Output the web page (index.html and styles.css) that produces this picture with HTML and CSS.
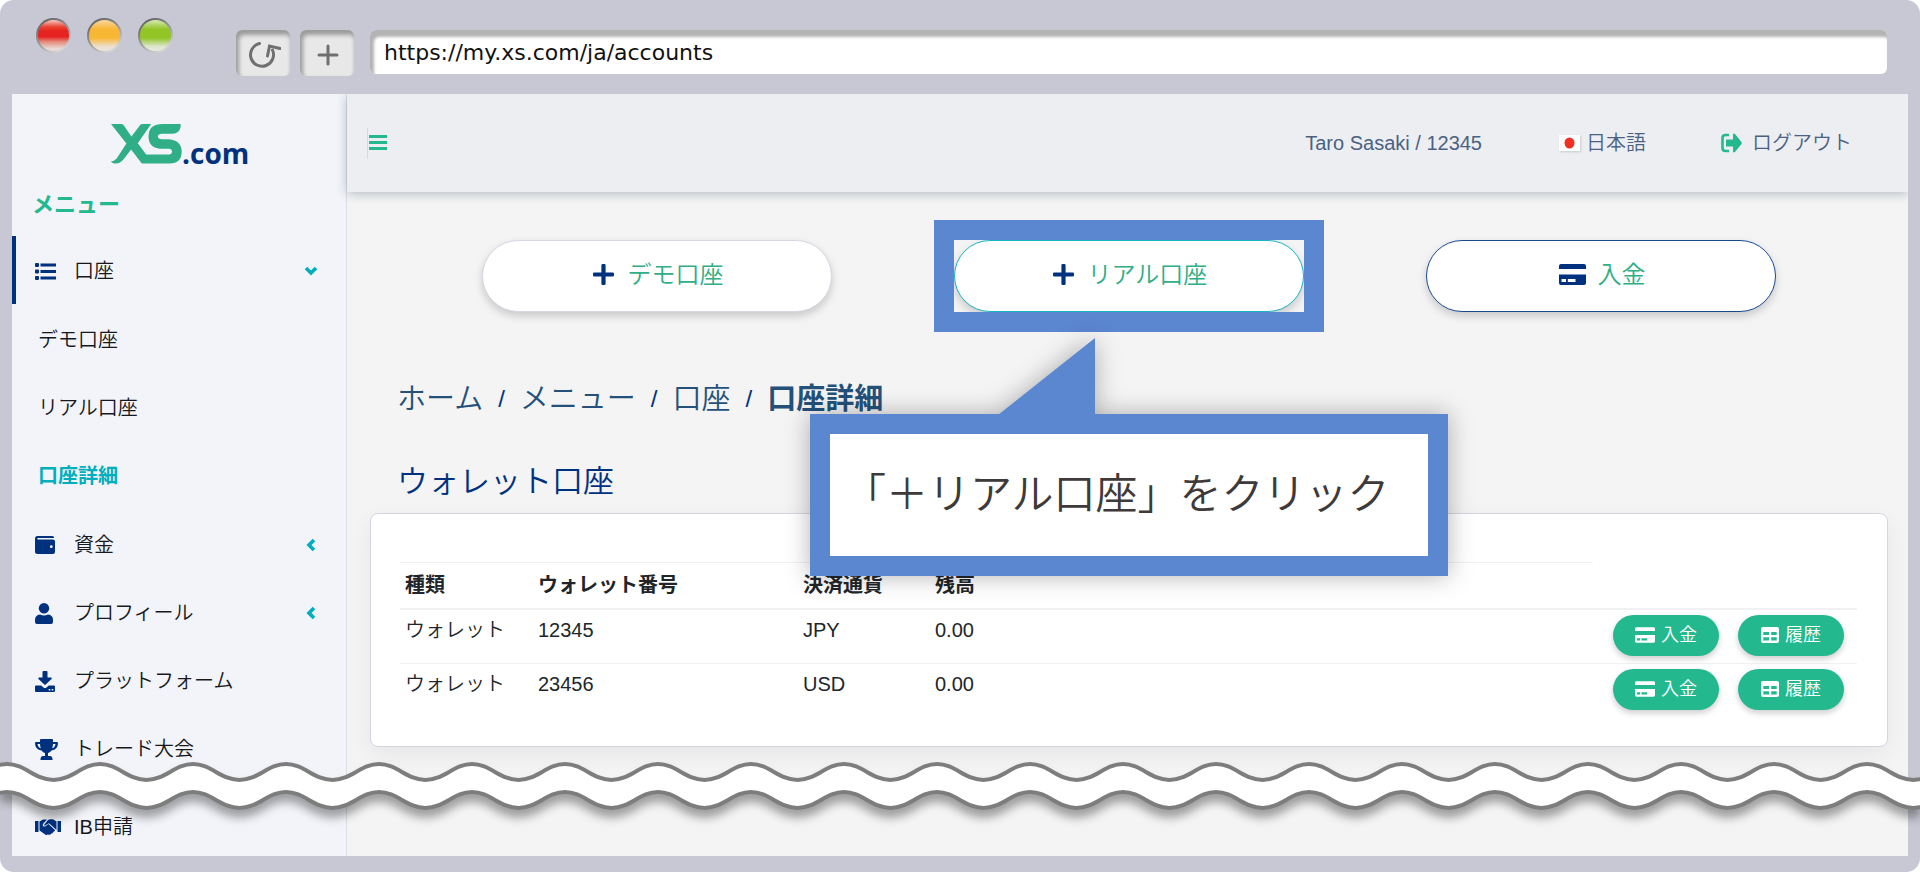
FILE: index.html
```html
<!DOCTYPE html>
<html lang="ja">
<head>
<meta charset="utf-8">
<meta name="viewport" content="width=device-width, initial-scale=1">
<title>XS.com - 口座詳細</title>
<link rel="stylesheet" href="styles.css">
</head>
<body>
<div class="browser">
  <svg class="sprite" aria-hidden="true">
    <symbol id="i-plus" viewBox="0 0 20 20"><path d="M8 1.200Q8 0 9.200 0h1.600Q12 0 12 1.200V8h6.800Q20 8 20 9.200v1.600Q20 12 18.800 12H12v6.800Q12 20 10.800 20H9.200Q8 20 8 18.800V12H1.200Q0 12 0 10.800V9.200Q0 8 1.200 8H8z"/></symbol>
    <symbol id="i-card" viewBox="0 0 27 21"><path d="M0 5V2Q0 0 2 0H25Q27 0 27 2V5zM0 10.500H27V19Q27 21 25 21H2Q0 21 0 19zM2.500 15v3H7v-3zM8.800 15v3H16.500v-3z" fill-rule="evenodd"/></symbol>
    <symbol id="i-table" viewBox="0 0 18 16"><path d="M2 0H16Q18 0 18 2V14Q18 16 16 16H2Q0 16 0 14V2Q0 0 2 0zM2.300 5V8H8V5zM10.200 5V8H15.700V5zM2.300 10.300V13.500H8V10.300zM10.200 10.300V13.500H15.700V10.300z" fill-rule="evenodd"/></symbol>
    <symbol id="i-left" viewBox="0 0 10 14"><path d="M8 2 3 7l5 5" fill="none" stroke="currentColor" stroke-width="3.600"/></symbol>
  </svg>
  <header class="chrome">
    <div class="lights"><span class="light red"></span><span class="light amber"></span><span class="light green"></span></div>
    <div class="tools">
      <button class="tool" type="button" aria-label="再読み込み">
        <svg class="line" width="34" height="28" viewBox="0 0 34 28"><path d="M12.500 2.500A11.500 11.500 0 1 0 25.500 9"/><path d="M20.500 15 22.500 5 33 7.500"/></svg>
      </button>
      <button class="tool" type="button" aria-label="新しいタブ">
        <svg class="line" width="22" height="22" viewBox="0 0 22 22"><path d="M11 2v18M2 11h18"/></svg>
      </button>
    </div>
    <input class="url" type="text" aria-label="アドレス" value="https://my.xs.com/ja/accounts">
  </header>

  <div class="app">
    <aside class="side">
      <a class="logo" href="#" aria-label="XS.com">
        <svg width="71" height="40" viewBox="335 373 212 119"><path fill="#30ae85" d="M335 373H366Q371 373 374 378L396 410 421 377Q424 373 429 373H455L415 430 440 464H508Q517 464 517 455Q517 447 508 447H490Q447 447 447 410Q447 373 490 373H543V380Q540 402 515 402H488Q475 402 475 410Q475 418 488 418H508Q546 422 546 455Q546 491 510 491H427L395 449 372 479Q362 491 350 491Q338 491 335 484Q345 484 352 476L381 431Z"/></svg>
        <span>.com</span>
      </a>
      <h2 class="side-title">メニュー</h2>
      <nav>
        <a class="item active" href="#">
          <svg class="ico" width="21" height="17" viewBox="0 0 21 17"><path d="M0 1Q0 0 1 0H3Q4 0 4 1V3Q4 4 3 4H1Q0 4 0 3zM0 7.500Q0 6.500 1 6.500H3Q4 6.500 4 7.500V9.500Q4 10.500 3 10.500H1Q0 10.500 0 9.500zM0 14Q0 13 1 13H3Q4 13 4 14V16Q4 17 3 17H1Q0 17 0 16zM5.500 .5H21V3.500H5.500zM5.500 7H21v3H5.500zM5.500 13.500H21v3H5.500z"/></svg>
          <span>口座</span>
          <svg class="arrow down" width="10" height="14"><use href="#i-left"/></svg>
        </a>
        <div class="sub">
          <a class="item" href="#">デモ口座</a>
          <a class="item" href="#">リアル口座</a>
          <a class="item current" href="#">口座詳細</a>
        </div>
        <a class="item" href="#">
          <svg class="ico" width="20" height="18" viewBox="0 0 20 18"><path fill-rule="evenodd" d="M2.500 0H17.500Q19 0 19 1.500V2H3Q2.200 2 2.200 2.700T3 3.400H18Q20 3.400 20 5.400V16Q20 18 18 18H2.500Q0 18 0 15.500V2.500Q0 0 2.500 0zM16.300 9.300A1.400 1.400 0 1 0 16.300 12.100 1.400 1.400 0 1 0 16.300 9.300z"/></svg>
          <span>資金</span>
          <svg class="arrow" width="10" height="14"><use href="#i-left"/></svg>
        </a>
        <a class="item" href="#">
          <svg class="ico" width="18" height="21" viewBox="0 0 18 21"><circle cx="9" cy="5.200" r="5.200"/><path d="M5 11.500Q9 13.500 13 11.500 18 12 18 17V19Q18 21 16 21H2Q0 21 0 19V17Q0 12 5 11.500z"/></svg>
          <span>プロフィール</span>
          <svg class="arrow" width="10" height="14"><use href="#i-left"/></svg>
        </a>
        <a class="item" href="#">
          <svg class="ico" width="20" height="21" viewBox="0 0 20 21"><path fill-rule="evenodd" d="M8.500 0H11.500Q12.500 0 12.500 1V6.500H16Q17.500 6.800 16.500 8L10.700 13.500Q10 14 9.300 13.500L3.500 8Q2.500 6.800 4 6.500H7.500V1Q7.500 0 8.500 0zM1 14.500H6.200L8.500 16.500Q10 17.600 11.500 16.500L13.800 14.500H19Q20 14.500 20 15.500V20Q20 21 19 21H1Q0 21 0 20V15.500Q0 14.500 1 14.500zM13.700 18v1.600h1.600V18zM16.700 18v1.600h1.600V18z"/></svg>
          <span>プラットフォーム</span>
        </a>
        <a class="item" href="#">
          <svg class="ico" width="23" height="21" viewBox="0 0 23 21"><path fill-rule="evenodd" d="M5 1Q5 0 6 0H17Q18 0 18 1V3H22Q23 3 23 4 23 10.500 16.500 11.500 15 13.500 13 14V17H15.500Q17.500 17.500 17.500 20V21H5.500V20Q5.500 17.500 7.500 17H10V14Q8 13.500 6.500 11.500 0 10.500 0 4 0 3 1 3H5zM2.500 5Q3 8.500 5.800 9.300 5 7 5 5zM18 5Q18 7 17.200 9.300 20 8.500 20.500 5z"/></svg>
          <span>トレード大会</span>
        </a>
        <a class="item last" href="#">
          <svg class="ico" width="26" height="16" viewBox="0 0 26 16"><path d="M0 2H3.500V13H0zM22.500 2H26V13H22.500zM4.500 2.500 8 .5H12L8 5Q7 8 10 7.500L13.500 5 20 11Q20 12.500 18.500 12.800 18 14.500 16.500 14.500 15 16.500 13 15.500 11 16.500 9.500 15L4.500 11.500zM13 1 15 0.300H18L21.500 2.500V11L14 4.200 10 6.600Q8.800 6.800 9.300 5.600z"/></svg>
          <span>IB申請</span>
        </a>
      </nav>
    </aside>

    <div class="page">
      <header class="top">
        <button class="burger" type="button" aria-label="メニュー切替"><i></i><i></i><i></i></button>
        <span class="user">Taro Sasaki / 12345</span>
        <a class="lang" href="#"><svg width="21" height="16" viewBox="0 0 21 16"><path fill="#fff" d="M0 0H21V16H0z"/><ellipse cx="10.500" cy="8" rx="5" ry="5.500" fill="#ee2f22"/></svg>日本語</a>
        <a class="logout" href="#"><svg width="21" height="20" viewBox="0 0 21 20"><path d="M8 2H4.500Q1.500 2 1.500 5V15Q1.500 18 4.500 18H8" fill="none" stroke="#24b88f" stroke-width="2.600"/><path d="M5.500 6.500H12V1.500Q12.500 0 14 1L20.500 9Q21 10 20.500 11L14 19Q12.500 20 12 18.500V13.500H5.500Q5 13.500 5 13V7Q5 6.500 5.500 6.500z" fill="#24b88f"/></svg>ログアウト</a>
      </header>

      <main class="main">
        <div class="actions">
          <div class="slot"><button class="pill" type="button"><svg width="21" height="21"><use href="#i-plus"/></svg>デモ口座</button></div>
          <div class="slot">
            <button class="pill real" type="button"><svg width="21" height="21"><use href="#i-plus"/></svg>リアル口座</button>
            <div class="highlight"></div>
            <div class="callout">
              <svg class="pointer" width="97" height="77" viewBox="0 0 97 77"><path d="M97 0V77H0z"/></svg>
              <p>「＋リアル口座」をクリック</p>
            </div>
          </div>
          <div class="slot"><button class="pill deposit" type="button"><svg width="27" height="21"><use href="#i-card"/></svg>入金</button></div>
        </div>

        <nav class="crumbs" aria-label="パンくず">
          <a href="#">ホーム</a><span>/</span><a href="#">メニュー</a><span>/</span><a href="#">口座</a><span>/</span><strong>口座詳細</strong>
        </nav>

        <h1 class="heading">ウォレット口座</h1>
        <section class="card">
          <table>
            <colgroup><col class="c1"><col class="c2"><col class="c3"><col><col class="c5"></colgroup>
            <thead><tr><th>種類</th><th>ウォレット番号</th><th>決済通貨</th><th>残高</th><td></td></tr></thead>
            <tbody>
              <tr><td>ウォレット</td><td>12345</td><td>JPY</td><td>0.00</td><td><div class="btns"><button type="button"><svg width="20" height="16"><use href="#i-card"/></svg>入金</button><button type="button"><svg width="18" height="16"><use href="#i-table"/></svg>履歴</button></div></td></tr>
              <tr><td>ウォレット</td><td>23456</td><td>USD</td><td>0.00</td><td><div class="btns"><button type="button"><svg width="20" height="16"><use href="#i-card"/></svg>入金</button><button type="button"><svg width="18" height="16"><use href="#i-table"/></svg>履歴</button></div></td></tr>
            </tbody>
          </table>
        </section>
      </main>
    </div>
  </div>

  <svg class="wave" aria-hidden="true">
    <defs>
      <pattern id="wave" width="93" height="70" patternUnits="userSpaceOnUse" x="7">
        <path fill="#fff" d="M0 4C18 4 28 20 46.500 20S75 4 93 4V32C75 32 65 48 46.500 48S18 32 0 32z"/>
        <path fill="none" stroke="#7d7d7d" stroke-width="4" d="M-46.500 20C-28 20-18 4 0 4S28 20 46.500 20 75 4 93 4 121 20 139.500 20M-46.500 48C-28 48-18 32 0 32S28 48 46.500 48 75 32 93 32 121 48 139.500 48"/>
      </pattern>
    </defs>
    <rect width="100%" height="70" fill="url(#wave)"/>
  </svg>
</div>
</body>
</html>
```
FILE: styles.css
```css
* { box-sizing: border-box; }

html, body { height: 100%; }

body {
  margin: 0;
  background: #fff;
  color: #212529;
  font: 350 20px/28px "Liberation Sans", "Noto Sans CJK JP", sans-serif;
}

a { color: inherit; text-decoration: none; }
button { font: inherit; color: inherit; border: 0; padding: 0; cursor: pointer; }
svg { fill: currentColor; flex: none; }
.sprite { position: absolute; width: 0; height: 0; }

.browser {
  position: relative;
  display: flex;
  flex-direction: column;
  min-height: 100%;
  padding: 0 12px 16px;
  border-radius: 14px;
  background: #c8c8d4;
  overflow: hidden;
}

/* window chrome */
.chrome { display: flex; flex: none; align-items: flex-start; height: 94px; padding: 0 21px 0 24px; }
.lights { display: flex; gap: 16px; padding-top: 18px; margin-right: 63px; }
.light {
  width: 35px;
  height: 35px;
  border: 2px solid transparent;
  border-radius: 50%;
}
.red { background: linear-gradient(#f6c9c2 0, #ea4433 22%, #e62320 36%, #e62320 54%, #e58a7c 70%, #ebd9d6 92%) padding-box, linear-gradient(150deg, #555, #999 50%, #eee) border-box; }
.amber { background: linear-gradient(#f9d79f 0, #f8b635 30%, #f8b635 58%, #ecdfcd 85%, #ebe5df 100%) padding-box, linear-gradient(150deg, #555, #999 50%, #eee) border-box; }
.green { background: linear-gradient(#d5e8b5 0, #93c527 30%, #93c527 58%, #dce6cc 85%, #e6eae0 100%) padding-box, linear-gradient(150deg, #555, #999 50%, #eee) border-box; }

.tools { display: flex; gap: 10px; padding-top: 30px; margin-right: 16px; }
.tool {
  display: flex;
  align-items: center;
  justify-content: center;
  width: 54px;
  height: 46px;
  padding: 4px 0 0 2px;
  border-radius: 6px;
  background: #e8e8e8;
  box-shadow: inset 2px 4px 4px 1px #9b9b9b;
}
.line { fill: none; stroke: #707070; stroke-width: 3; stroke-linecap: round; }
.url {
  flex: 1;
  min-width: 0;
  height: 44px;
  margin-top: 30px;
  padding: 0 14px;
  border: 0;
  border-radius: 6px;
  background: #fff;
  box-shadow: inset 3px 6px 3px 1px #b3b3b3;
  color: #111;
  font: 22px/30px "DejaVu Sans", sans-serif;
}

/* layout */
.app { display: flex; flex: 1; background: #f4f4f4; }
.side { width: 335px; flex: none; background: #f2f4f9; border-right: 1px solid #dcdee3; }
.page { flex: 1; min-width: 0; display: flex; flex-direction: column; }

/* sidebar */
.logo { display: flex; align-items: flex-end; margin: 30px 0 0 99px; height: 40px; color: #00317f; }
.logo span { font: 700 28px/22px "Open Sans", sans-serif; }
.side-title { margin: 27px 0 17px; padding-left: 20px; font-size: 22px; line-height: 28px; font-weight: 700; color: #24b88f; }
.item {
  display: grid;
  grid-template-columns: 39px 1fr auto;
  align-items: center;
  height: 68px;
  padding: 2px 30px 0 19px;
  border-left: 4px solid transparent;
  color: #16181b;
}
.item .ico { color: #00317f; }
.item .arrow { color: #00aebd; }
.item .arrow.down { transform: rotate(-90deg); }
.item.active { border-left-color: #00317f; }
.sub { padding: 1px 0; }
.sub .item { display: flex; padding-left: 22px; }
.item.current { color: #00aebd; font-weight: 700; }
.item.last { height: 60px; margin-top: 14px; }

/* top bar */
.top {
  position: relative;
  display: flex;
  align-items: center;
  height: 98px;
  padding: 0 56px 0 20px;
  background: #edeef2;
  box-shadow: 0 2px 10px rgba(40, 60, 90, .3);
  clip-path: inset(0 0 -20px -10px);
  color: #4a6282;
}
.burger { display: flex; flex-direction: column; gap: 3px; width: 20px; padding: 7px 0 9px 1px; border-left: 1px solid #d8d9dc; background: none; }
.burger i { height: 3px; background: #24b88f; }
.user { margin-left: auto; margin-right: 77px; }
.lang { display: flex; align-items: center; gap: 6px; margin-right: 75px; }
.lang svg { filter: drop-shadow(1px 1px 1px rgba(0, 0, 0, .15)); }
.logout { display: flex; align-items: center; gap: 10px; }

/* main */
.main { padding: 48px 20px 0 23px; }
.actions { display: grid; grid-template-columns: repeat(3, 1fr); margin: 0 51px; }
.slot { position: relative; width: 350px; max-width: 100%; justify-self: center; }
.pill {
  display: flex;
  align-items: center;
  justify-content: center;
  gap: 14px;
  width: 100%;
  height: 72px;
  padding: 0 0 3px 2px;
  border: 1px solid #d5d7e2;
  border-radius: 36px;
  background: #fff;
  box-shadow: 0 4px 8px rgba(0, 0, 0, .18);
  color: #30ae85;
  font-size: 24px;
}
.pill svg { color: #00317f; }
.pill.real { border-color: #1ab5c3; }
.pill.deposit { border-color: #1c4a8f; gap: 12px; }

.highlight { position: absolute; inset: -20px; border: 20px solid #5b86d0; pointer-events: none; }
.callout {
  position: absolute;
  z-index: 2;
  top: 174px;
  left: -144px;
  padding: 20px;
  background: #5b86d0;
  filter: drop-shadow(0 0 12px rgba(0, 0, 0, .3));
}
.callout p { margin: 0; padding: 30px 38px 30px 14px; background: #fff; color: #3e3a39; font-size: 42px; line-height: 62px; white-space: nowrap; }
.pointer { position: absolute; left: 188px; bottom: 100%; color: #5b86d0; margin-bottom: -1px; }

.crumbs { display: flex; gap: 15px; margin: 67px 0 0 27px; font-size: 29px; line-height: 40px; color: #245179; }
.crumbs span { color: #00317f; font-size: 24px; }
.crumbs strong { font-weight: 700; }
.heading { margin: 43px 0 11px 27px; font-size: 31px; line-height: 40px; font-weight: 350; color: #00317f; }

.card {
  padding: 48px 30px 28px 29px;
  border: 1px solid #d3d6e0;
  border-radius: 8px;
  background: #fff;
  box-shadow: 0 8px 24px rgba(0, 0, 0, .06);
}
table { width: 100%; table-layout: fixed; border-collapse: separate; border-spacing: 0; }
.c1 { width: 133px; }
.c2 { width: 265px; }
.c3 { width: 132px; }
.c5 { width: 264px; }
th { height: 46px; padding: 0 5px 2px; border-top: 1px solid #f1f1f3; text-align: left; font-weight: 700; }
tbody td { height: 55px; padding: 6px 5px 0; border-top: 1px solid #f1f1f3; vertical-align: top; }
tbody tr:first-child td { border-top-width: 2px; }
tbody td:last-child { padding: 5px 13px 0 20px; }
.btns { display: flex; justify-content: space-between; }
.btns button {
  display: flex;
  align-items: center;
  justify-content: center;
  gap: 6px;
  width: 106px;
  height: 41px;
  padding-bottom: 1px;
  border-radius: 21px;
  background: #24b88f;
  box-shadow: 0 3px 6px rgba(0, 0, 0, .2);
  color: #fff;
  font-size: 18px;
}

.wave {
  position: absolute;
  left: 0;
  bottom: 42px;
  width: 100%;
  height: 70px;
  overflow: visible;
  filter: drop-shadow(0 8px 5px rgba(0, 0, 0, .35));
}
```
